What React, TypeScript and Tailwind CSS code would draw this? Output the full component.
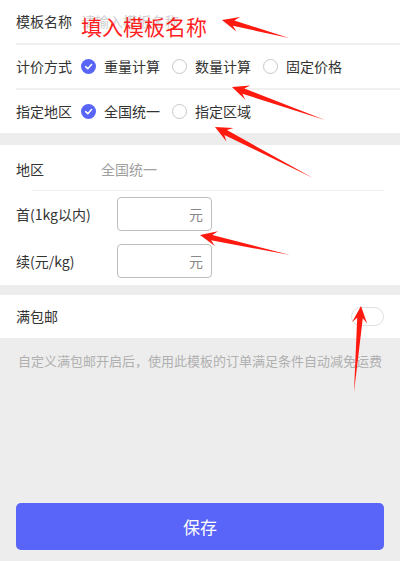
import React from "react";

const FONT = { fontFamily: '"Noto Sans CJK SC", "Noto Sans", sans-serif' };

function Check({ on }: { on: boolean }) {
  if (on)
    return (
      <span className="w-[15px] h-[15px] rounded-full bg-[#5865f6] flex items-center justify-center shrink-0">
        <svg width="9" height="9" viewBox="0 0 10 10">
          <path d="M1.8 5.2 L4.2 7.4 L8.4 2.8" fill="none" stroke="#fff" strokeWidth="1.7" strokeLinecap="round" strokeLinejoin="round" />
        </svg>
      </span>
    );
  return <span className="w-[15px] h-[15px] rounded-full border border-[#c8c8c8] bg-white shrink-0" />;
}

function Opt({ on, label }: { on: boolean; label: string }) {
  return (
    <div className="flex items-center gap-[8px] mr-[12px]">
      <Check on={on} />
      <span className="text-[14px] text-[#333]">{label}</span>
    </div>
  );
}

function arrow(tip: [number, number], tail: [number, number]) {
  const [tx, ty] = tip;
  const [sx, sy] = tail;
  const dx = tx - sx;
  const dy = ty - sy;
  const len = Math.hypot(dx, dy);
  const ux = dx / len;
  const uy = dy / len;
  const nx = -uy;
  const ny = ux;
  const head = 16;
  const p = (a: number, b: number) => `${(tx - ux * a + nx * b).toFixed(1)},${(ty - uy * a + ny * b).toFixed(1)}`;
  const pts = [
    `${sx},${sy}`,
    p(head * 0.75, 2.8),
    p(head * 1.05, 7.5),
    `${tx},${ty}`,
    p(head * 1.05, -7.5),
    p(head * 0.75, -2.8),
  ];
  return pts.join(" ");
}

const arrows: [[number, number], [number, number]][] = [
  [[222, 20], [289, 38]],
  [[232, 87], [325, 120]],
  [[215, 127], [313, 178]],
  [[200, 235], [290, 255]],
  [[361, 306], [354, 392]],
];

export default function App() {
  return (
    <div style={FONT} className="relative w-[400px] h-[561px] bg-[#ededed] flex flex-col overflow-hidden">
      <div className="bg-white flex flex-col">
        <div className="ml-4 h-[43px] flex items-center">
          <span className="w-[65px] text-[14px] text-[#333]">模板名称</span>
          <span className="text-[14px] text-[#cfcfcf]">请输入模板名称</span>
        </div>
        <div className="ml-4 h-[2px] bg-[#f0f0f0]" />
        <div className="ml-4 h-[43px] flex items-center">
          <span className="w-[65px] text-[14px] text-[#333]">计价方式</span>
          <Opt on label="重量计算" />
          <Opt on={false} label="数量计算" />
          <Opt on={false} label="固定价格" />
        </div>
        <div className="ml-4 h-[2px] bg-[#f0f0f0]" />
        <div className="ml-4 h-[43px] flex items-center">
          <span className="w-[65px] text-[14px] text-[#333]">指定地区</span>
          <Opt on label="全国统一" />
          <Opt on={false} label="指定区域" />
        </div>
      </div>

      <div className="mt-[12px] bg-white flex flex-col pb-[7px]">
        <div className="h-[45px] flex items-center pt-[4px] px-4">
          <span className="w-[85px] text-[14px] text-[#333]">地区</span>
          <span className="text-[14px] text-[#a0a0a0]">全国统一</span>
        </div>
        <div className="ml-8 mr-4 h-px bg-[#efefef]" />
        <div className="mt-[6px] flex items-center px-4">
          <span className="w-[101px] text-[14px] text-[#333]">首(1kg以内)</span>
          <div className="w-[95px] h-[34px] rounded-[4px] border border-[#bdbdbd] flex items-center justify-end pr-[8px]">
            <span className="text-[14px] text-[#888]">元</span>
          </div>
        </div>
        <div className="mt-[13px] flex items-center px-4">
          <span className="w-[101px] text-[14px] text-[#333]">续(元/kg)</span>
          <div className="w-[95px] h-[34px] rounded-[4px] border border-[#bdbdbd] flex items-center justify-end pr-[8px]">
            <span className="text-[14px] text-[#888]">元</span>
          </div>
        </div>
      </div>

      <div className="mt-[10px] bg-white h-[43px] flex items-center justify-between pl-4 pr-4">
        <span className="text-[14px] text-[#333]">满包邮</span>
        <span className="w-[33px] h-[19px] rounded-full border border-[#e0e0e0] bg-white" />
      </div>

      <div className="mt-[13px] text-center text-[13px] text-[#b0b0b0]">自定义满包邮开启后，使用此模板的订单满足条件自动减免运费</div>

      <div className="mt-auto mb-[11px] mx-4 h-[47px] rounded-[5px] bg-[#5865f8] flex items-center justify-center">
        <span className="text-[17px] text-white">保存</span>
      </div>

      <div className="absolute left-[81px] top-[12px] text-[21px] leading-[28px] text-[#ff1f1f]">填入模板名称</div>
      <svg className="absolute left-0 top-0 pointer-events-none" width="400" height="561">
        {arrows.map((a, i) => (
          <polygon key={i} points={arrow(a[0], a[1])} fill="#ff1a10" />
        ))}
      </svg>
    </div>
  );
}
